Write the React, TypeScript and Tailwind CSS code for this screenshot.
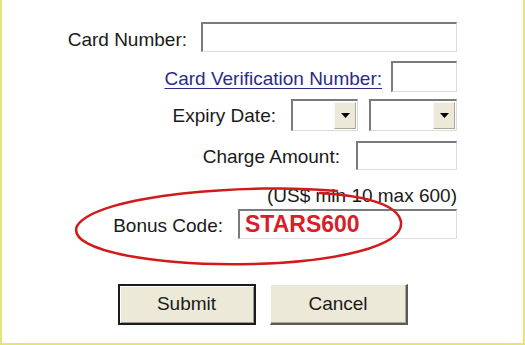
import React from 'react';

const inset =
  'bg-white border-t-2 border-l-2 border-r border-b border-t-[#7b7b7b] border-l-[#7b7b7b] border-r-[#dcdcdc] border-b-[#dcdcdc]';

function Select({ width }: { width: string }) {
  return (
    <div className={`${inset} ${width} h-[32px] flex justify-end items-stretch py-[1px] pr-[1px]`}>
      <div className="w-[22px] bg-[#ece9d8] border-t border-l border-[#f8f8f4] border-r border-b border-r-[#aca899] border-b-[#aca899] flex items-center justify-center">
        <svg width="9" height="5" viewBox="0 0 9 5">
          <path d="M0 0 H9 L4.5 5 Z" fill="#000" />
        </svg>
      </div>
    </div>
  );
}

export default function App() {
  return (
    <div
      className="relative w-[525px] h-[345px] bg-white border-l-2 border-r-2 border-b-2 border-[#e4e47a] flex flex-col text-[19px] text-[#1a1a1a] overflow-hidden"
      style={{ fontFamily: '"Liberation Sans", Arial, sans-serif' }}
    >
      <div className="mt-[22px] h-[30px] flex items-center justify-end pr-[66px]">
        <span className="mr-[14px] leading-none pt-[5px]">Card Number:</span>
        <div className={`${inset} w-[256px] h-[30px]`} />
      </div>

      <div className="mt-[9px] h-[31px] flex items-center justify-end pr-[66px]">
        <a href="#" className="mr-[9px] leading-none pt-[3px] text-[#2b2b88] underline underline-offset-[3px] decoration-1">
          Card Verification Number:
        </a>
        <div className={`${inset} w-[66px] h-[31px]`} />
      </div>

      <div className="mt-[7px] h-[32px] flex items-center justify-end pr-[66px]">
        <span className="mr-[15px] leading-none">Expiry Date:</span>
        <Select width="w-[67px]" />
        <div className="w-[11px]" />
        <Select width="w-[88px]" />
      </div>

      <div className="mt-[10px] h-[29px] flex items-center justify-end pr-[66px]">
        <span className="mr-[16px] leading-none pt-[2px]">Charge Amount:</span>
        <div className={`${inset} w-[101px] h-[29px]`} />
      </div>

      <div className="mt-[15px] h-[20px] flex items-center justify-end pr-[66px]">
        <span className="leading-none">(US$ min 10 max 600)</span>
      </div>

      <div className="mt-[4px] h-[30px] flex items-center justify-end pr-[66px]">
        <span className="mr-[15px] leading-none pt-[2px]">Bonus Code:</span>
        <div className={`${inset} w-[219px] h-[30px] flex items-center pl-[5px]`}>
          <span className="text-[23px] font-bold text-[#d81e28] leading-none">STARS600</span>
        </div>
      </div>

      <div className="mt-[45px] flex justify-center gap-[14px]">
        <button className="w-[138px] h-[41px] bg-[#ece9d8] border-2 border-[#1c1c1c] shadow-[inset_1px_1px_0_#ffffff,inset_-1px_-1px_0_#9a9a90] text-[19px] text-[#1a1a1a]">
          Submit
        </button>
        <button className="w-[138px] h-[41px] bg-[#ece9d8] border-t border-l border-[#ffffff] border-r-2 border-b-2 border-r-[#5a5a56] border-b-[#5a5a56] shadow-[inset_-1px_-1px_0_#a8a89c] text-[19px] text-[#1a1a1a]">
          Cancel
        </button>
      </div>

      <svg
        className="absolute left-0 top-0 pointer-events-none"
        width="525"
        height="345"
        viewBox="0 0 525 345"
      >
        <path
          d="M335 191 C250 183 95 194 75 226 C64 252 160 266 250 264 C335 262 402 246 399 222 C396 205 365 196 318 193"
          fill="none"
          stroke="#d11a1a"
          strokeWidth="2.5"
          strokeLinecap="round"
        />
      </svg>
    </div>
  );
}
